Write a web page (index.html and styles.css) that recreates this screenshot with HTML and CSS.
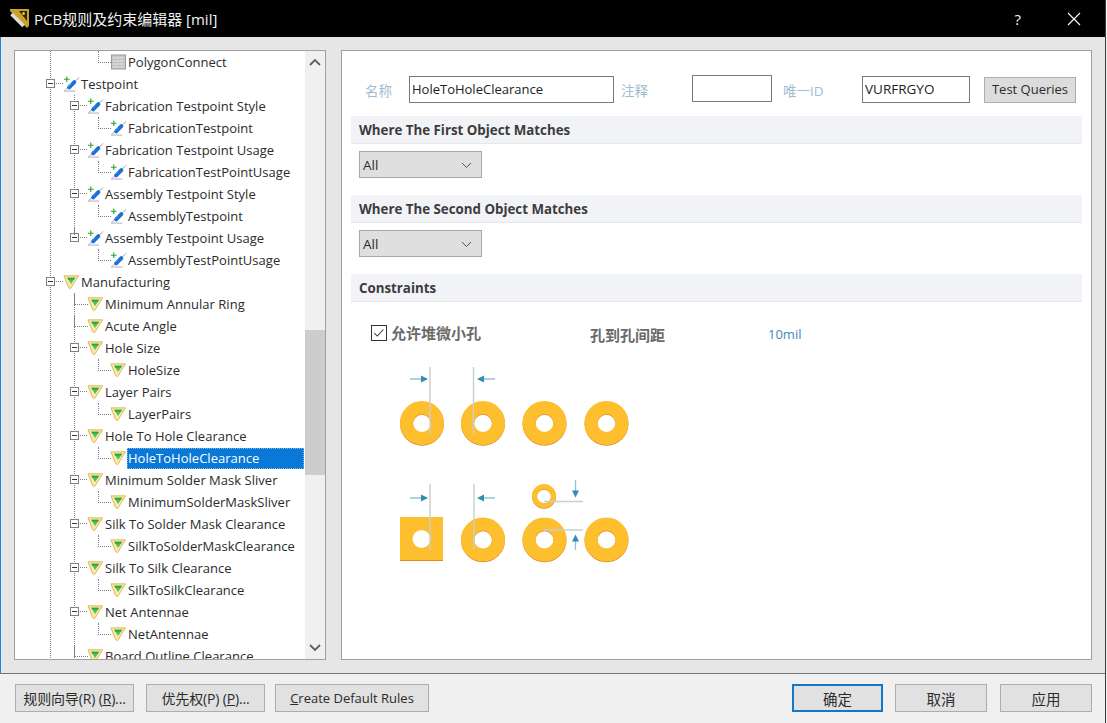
FILE: index.html
```html
<!DOCTYPE html>
<html lang="zh-CN">
    <head>
        <meta charset="UTF-8" />
        <title>PCB规则及约束编辑器 [mil]</title>
        <link rel="stylesheet" href="styles.css">
    </head>
    <body>
        <svg class="defs" width="0" height="0">
            <symbol id="i-gray" viewBox="0 0 16 16">
                <rect x="1" y="1" width="14" height="14" fill="#c8c8c8" stroke="#9a9a9a"/>
                <path d="M3 4h10M3 7h10M3 10h10M3 13h10" stroke="#ececec" stroke-width="1.2" stroke-dasharray="2 1"/>
                <path d="M3 5.500h10M3 8.500h10M3 11.500h10" stroke="#a8a8a8" stroke-width=".8" stroke-dasharray="1 2"/>
            </symbol>
            <symbol id="i-test" viewBox="0 0 18 16">
                <path d="M4 0v6M1 3h6" stroke="#2aa336" stroke-width="1.2" fill="none"/>
                <path d="M1 15.500h12" stroke="#b4a6c6" stroke-width="1"/>
                <path d="M2 15l3-3M13 5l4-4" stroke="#9a9a9a" stroke-width="1"/>
                <path d="M6.500 11.500L12 6" stroke="#1c6fd6" stroke-width="4.200" stroke-linecap="round"/>
                <path d="M6 10l3-3" stroke="#6fb2f0" stroke-width="1"/>
            </symbol>
            <symbol id="i-manu" viewBox="0 0 18 16">
                <path d="M1 1.500h15.500L8 15l-2-1z" fill="#fbe9a4" stroke="#d8ac48" stroke-width=".9"/>
                <path d="M4.500 3.500h8.500L8.500 10z" fill="#4fc05e"/>
                <path d="M4.500 3.500h8.500l-1.500 2.200H5.300z" fill="#2fa844"/>
            </symbol>
        </svg>

        <div class="window">
            <div class="titlebar">
                <svg class="logo" width="20" height="20" viewBox="0 0 20 20">
                    <path d="M0 0h19v17l-2 2L0 2z" fill="#c9a227"/>
                    <path d="M9 2h8v10z" fill="#2c2410"/>
                    <circle cx="13.500" cy="4.500" r="1.500" fill="#e8c23a"/>
                    <path d="M1.500 5l12 12" stroke="#dcdcdc" stroke-width="3.600"/>
                </svg>
                <span class="title">PCB规则及约束编辑器 [mil]</span>
                <span class="help">?</span>
                <svg class="close" width="14" height="14" viewBox="0 0 14 14">
                    <path d="M1 1l12 12M13 1L1 13" stroke="#fff" stroke-width="1.1"/>
                </svg>
            </div>

            <div class="content">
                <div class="tree-panel">
                    <div class="tree">
                        <div class="row lv2"><svg class="icon"><use href="#i-gray"/></svg><span class="label">PolygonConnect</span></div>
                        <div class="row lv0 open"><i class="box"></i><svg class="icon"><use href="#i-test"/></svg><span class="label">Testpoint</span></div>
                        <div class="row lv1 on open"><i class="box"></i><svg class="icon"><use href="#i-test"/></svg><span class="label">Fabrication Testpoint Style</span></div>
                        <div class="row lv2 on"><svg class="icon"><use href="#i-test"/></svg><span class="label">FabricationTestpoint</span></div>
                        <div class="row lv1 on open"><i class="box"></i><svg class="icon"><use href="#i-test"/></svg><span class="label">Fabrication Testpoint Usage</span></div>
                        <div class="row lv2 on"><svg class="icon"><use href="#i-test"/></svg><span class="label">FabricationTestPointUsage</span></div>
                        <div class="row lv1 on open"><i class="box"></i><svg class="icon"><use href="#i-test"/></svg><span class="label">Assembly Testpoint Style</span></div>
                        <div class="row lv2 on"><svg class="icon"><use href="#i-test"/></svg><span class="label">AssemblyTestpoint</span></div>
                        <div class="row lv1 last open"><i class="box"></i><svg class="icon"><use href="#i-test"/></svg><span class="label">Assembly Testpoint Usage</span></div>
                        <div class="row lv2"><svg class="icon"><use href="#i-test"/></svg><span class="label">AssemblyTestPointUsage</span></div>
                        <div class="row lv0 open"><i class="box"></i><svg class="icon"><use href="#i-manu"/></svg><span class="label">Manufacturing</span></div>
                        <div class="row lv1 on"><svg class="icon"><use href="#i-manu"/></svg><span class="label">Minimum Annular Ring</span></div>
                        <div class="row lv1 on"><svg class="icon"><use href="#i-manu"/></svg><span class="label">Acute Angle</span></div>
                        <div class="row lv1 on open"><i class="box"></i><svg class="icon"><use href="#i-manu"/></svg><span class="label">Hole Size</span></div>
                        <div class="row lv2 on"><svg class="icon"><use href="#i-manu"/></svg><span class="label">HoleSize</span></div>
                        <div class="row lv1 on open"><i class="box"></i><svg class="icon"><use href="#i-manu"/></svg><span class="label">Layer Pairs</span></div>
                        <div class="row lv2 on"><svg class="icon"><use href="#i-manu"/></svg><span class="label">LayerPairs</span></div>
                        <div class="row lv1 on open"><i class="box"></i><svg class="icon"><use href="#i-manu"/></svg><span class="label">Hole To Hole Clearance</span></div>
                        <div class="row lv2 on"><svg class="icon"><use href="#i-manu"/></svg><span class="label selected">HoleToHoleClearance</span></div>
                        <div class="row lv1 on open"><i class="box"></i><svg class="icon"><use href="#i-manu"/></svg><span class="label">Minimum Solder Mask Sliver</span></div>
                        <div class="row lv2 on"><svg class="icon"><use href="#i-manu"/></svg><span class="label">MinimumSolderMaskSliver</span></div>
                        <div class="row lv1 on open"><i class="box"></i><svg class="icon"><use href="#i-manu"/></svg><span class="label">Silk To Solder Mask Clearance</span></div>
                        <div class="row lv2 on"><svg class="icon"><use href="#i-manu"/></svg><span class="label">SilkToSolderMaskClearance</span></div>
                        <div class="row lv1 on open"><i class="box"></i><svg class="icon"><use href="#i-manu"/></svg><span class="label">Silk To Silk Clearance</span></div>
                        <div class="row lv2 on"><svg class="icon"><use href="#i-manu"/></svg><span class="label">SilkToSilkClearance</span></div>
                        <div class="row lv1 on open"><i class="box"></i><svg class="icon"><use href="#i-manu"/></svg><span class="label">Net Antennae</span></div>
                        <div class="row lv2 on"><svg class="icon"><use href="#i-manu"/></svg><span class="label">NetAntennae</span></div>
                        <div class="row lv1 on"><svg class="icon"><use href="#i-manu"/></svg><span class="label">Board Outline Clearance</span></div>
                    </div>
                    <div class="scrollbar">
                        <svg class="arrow" width="12" height="22" viewBox="0 0 12 22"><path d="M1 14l5-5 5 5" fill="none" stroke="#606060" stroke-width="1.800"/></svg>
                        <div class="track"><div class="thumb"></div></div>
                        <svg class="arrow" width="12" height="22" viewBox="0 0 12 22"><path d="M1 8l5 5 5-5" fill="none" stroke="#606060" stroke-width="1.800"/></svg>
                    </div>
                </div>

                <div class="rule-panel">
                    <div class="form-row">
                        <span class="tag tag-name">名称</span>
                        <div class="input input-name">HoleToHoleClearance</div>
                        <span class="tag tag-note">注释</span>
                        <div class="input input-note"></div>
                        <span class="tag tag-id">唯一ID</span>
                        <div class="input input-id">VURFRGYO</div>
                        <div class="btn btn-test">Test Queries</div>
                    </div>

                    <div class="section first">Where The First Object Matches</div>
                    <div class="select">All<svg width="11" height="6" viewBox="0 0 11 6"><path d="M1 1l4.500 4.500L10 1" fill="none" stroke="#555"/></svg></div>

                    <div class="section">Where The Second Object Matches</div>
                    <div class="select">All<svg width="11" height="6" viewBox="0 0 11 6"><path d="M1 1l4.500 4.500L10 1" fill="none" stroke="#555"/></svg></div>

                    <div class="section">Constraints</div>
                    <div class="constraint">
                        <span class="check"><svg width="16" height="16" viewBox="0 0 16 16"><path d="M2.500 8l3.500 3.500L13 4" fill="none" stroke="#333" stroke-width="1.200"/></svg></span>
                        <span class="check-text">允许堆微小孔</span>
                        <span class="gap-text">孔到孔间距</span>
                        <span class="gap-val">10mil</span>
                    </div>

                    <svg class="diagram" width="250" height="205" viewBox="395 365 250 205">
                        <defs>
                            <mask id="hole-square"><rect x="395" y="365" width="250" height="205" fill="#fff"/><circle cx="421.500" cy="539" r="9" fill="#000"/></mask>
                        </defs>
                        <g fill="none" stroke="#dd8a26" transform="translate(0 .8)">
                            <circle cx="422" cy="423" r="15.500" stroke-width="13"/>
                            <circle cx="483" cy="423" r="15.500" stroke-width="13"/>
                            <circle cx="544.500" cy="423" r="15.500" stroke-width="13"/>
                            <circle cx="606.500" cy="423" r="15.500" stroke-width="13"/>
                            <circle cx="483" cy="539.500" r="15.500" stroke-width="13"/>
                            <circle cx="544.500" cy="539.500" r="15.500" stroke-width="13"/>
                            <circle cx="606.500" cy="539.500" r="15.500" stroke-width="13"/>
                            <circle cx="544" cy="496" r="9.500" stroke-width="5"/>
                        </g>
                        <g fill="none" stroke="#fdbf2d">
                            <circle cx="422" cy="423" r="15.500" stroke-width="13"/>
                            <circle cx="483" cy="423" r="15.500" stroke-width="13"/>
                            <circle cx="544.500" cy="423" r="15.500" stroke-width="13"/>
                            <circle cx="606.500" cy="423" r="15.500" stroke-width="13"/>
                            <circle cx="483" cy="539.500" r="15.500" stroke-width="13"/>
                            <circle cx="544.500" cy="539.500" r="15.500" stroke-width="13"/>
                            <circle cx="606.500" cy="539.500" r="15.500" stroke-width="13"/>
                            <circle cx="544" cy="496" r="9.500" stroke-width="5"/>
                        </g>
                        <rect x="400" y="517" width="43" height="44" fill="#fdbf2d" mask="url(#hole-square)"/>
                        <path d="M400 560.500h43" stroke="#e08a20"/>
                        <g stroke="#cdcdcd" stroke-width="1.400">
                            <path d="M430 367v67M473.500 367v67M430 484v66M474 484v66M544 501.500h39M544 530h39"/>
                        </g>
                        <g stroke="#8fc4d6" stroke-width="1.300">
                            <path d="M410 379h14M495 379h-14M410 498h14M495 498h-14M575.500 480v12M575.500 550v-12"/>
                        </g>
                        <g fill="#2f8fb0">
                            <path d="M421 375.500l7 3.500-7 3.500zM484 375.500l-7 3.500 7 3.500zM421 494.500l7 3.500-7 3.500zM484 494.500l-7 3.500 7 3.500zM572 490.500l3.500 7 3.500-7zM572 541.500l3.500-7 3.500 7z"/>
                        </g>
                    </svg>
                </div>
            </div>

            <div class="footer">
                <div class="btn btn-foot">规则向导(R) (<u>R</u>)...</div>
                <div class="btn btn-foot">优先权(P) (<u>P</u>)...</div>
                <div class="btn btn-create"><u>C</u>reate Default Rules</div>
                <div class="spacer"></div>
                <div class="btn btn-act default">确定</div>
                <div class="btn btn-act">取消</div>
                <div class="btn btn-act">应用</div>
            </div>
        </div>
    </body>
</html>
```

FILE: styles.css
```css
* {
    box-sizing: border-box;
}

html,
body {
    margin: 0;
    height: 100%;
    overflow: hidden;
}

body {
    font-family: "Open Sans", "Noto Sans CJK SC", sans-serif;
    font-size: 13px;
    color: #2b2b2b;
    background: #f0f0f0;
}

.defs {
    position: absolute;
}

.window {
    width: 1106px;
    height: 723px;
    display: flex;
    flex-direction: column;
    border-right: 1px solid #3c3c3c;
}

.titlebar {
    height: 37px;
    background: #000;
    color: #f2f2f2;
    display: flex;
    align-items: center;
    padding-left: 10px;
    font-size: 15px;
}

.logo {
    margin-right: 4px;
}

.title {
    flex: 1;
}

.help {
    font-size: 15px;
    margin-right: 46px;
}

.close {
    margin-right: 24px;
}

.content {
    height: 637px;
    background: #e6e6e6;
    border-left: 1px solid #1f86d8;
    border-bottom: 1px solid #70787c;
    display: flex;
    padding: 13px 13px 0 13px;
    gap: 15px;
}

.tree-panel {
    width: 312px;
    height: 610px;
    background: #fff;
    border: 1px solid #a0a0a0;
    display: flex;
    overflow: hidden;
}

.tree {
    width: 290px;
    height: 608px;
    overflow: hidden;
}

.row {
    height: 22px;
    display: flex;
    align-items: center;
    position: relative;
    white-space: nowrap;
    --dots: linear-gradient(#808080 50%, transparent 50%);
    background-image: var(--dots);
    background-size: 1px 2px;
    background-repeat: repeat-y;
    background-position: 35px 0;
}

.row.on {
    background-image: var(--dots), var(--dots);
    background-position: 35px 0, 59px 0;
    background-size: 1px 2px, 1px 2px;
}

.lv0 {
    padding-left: 48px;
}

.lv1 {
    padding-left: 72px;
}

.lv2 {
    padding-left: 95px;
}

/* elbow from the parent down to the icon */
.lv1::before,
.lv2::before {
    content: "";
    position: absolute;
    top: 0;
    height: 11px;
    border-left: 1px dotted #808080;
    border-bottom: 1px dotted #808080;
}

.lv1::before {
    left: 59px;
    width: 13px;
}

.lv2::before {
    left: 83px;
    width: 12px;
}

/* the box already draws the joint */
.lv1.open::before {
    width: 0;
    border-bottom: 0;
}

.last::after {
    content: "";
    position: absolute;
    left: 59px;
    top: 0;
    height: 8px;
    border-left: 1px dotted #808080;
}

.box {
    position: absolute;
    top: 6px;
    width: 9px;
    height: 9px;
    background: #fff;
    border: 1px solid #808080;
}

.box::before {
    content: "";
    position: absolute;
    left: 1px;
    right: 1px;
    top: 3px;
    border-top: 1px solid #333;
}

.box::after {
    content: "";
    position: absolute;
    left: 9px;
    top: 3px;
    width: 7px;
    border-top: 1px dotted #808080;
}

.lv0 .box {
    left: 31px;
}

.lv1 .box {
    left: 55px;
}

.icon {
    width: 17px;
    height: 16px;
    flex: none;
}

.label {
    padding: 0 1px;
    height: 21px;
    line-height: 21px;
    letter-spacing: 0.02px;
}

.selected {
    background: #0a78d7;
    color: #fff;
    width: 177px;
    outline: 1px dotted #7db8ea;
    outline-offset: -1px;
}

.scrollbar {
    width: 20px;
    background: #f0f0f0;
    display: flex;
    flex-direction: column;
    align-items: center;
}

.arrow {
    flex: none;
}

.track {
    flex: 1;
    width: 100%;
    padding-top: 257px;
}

.thumb {
    height: 145px;
    background: #cdcdcd;
}

.rule-panel {
    width: 751px;
    height: 610px;
    background: #fff;
    border: 1px solid #a0a0a0;
    padding: 0 9px;
}

.form-row {
    height: 65px;
    display: flex;
    align-items: center;
    padding-top: 12px;
    margin-right: 6px;
}

.tag {
    color: #a0bcd2;
    font-size: 13.500px;
}

.tag-name {
    margin-left: 14px;
    width: 44px;
}

.tag-note {
    margin-left: 7px;
    width: 71px;
}

.tag-id {
    margin-left: 11px;
    width: 79px;
}

.input {
    height: 27px;
    line-height: 25px;
    background: #fff;
    border: 1px solid #7a7a7a;
    padding-left: 2px;
    color: #222;
}

.input-name {
    width: 205px;
}

.input-note {
    width: 80px;
    margin-top: -2px;
}

.input-id {
    width: 108px;
    font-size: 13.500px;
}

.btn {
    background: #e1e1e1;
    border: 1px solid #adadad;
    display: flex;
    align-items: center;
    justify-content: center;
    color: #2b2b2b;
}

.btn-test {
    width: 92px;
    height: 26px;
    margin-left: 14px;
    padding-bottom: 2px;
    background: #dcdcdc;
}

.section {
    height: 28px;
    line-height: 28px;
    margin-top: 17px;
    padding-left: 8px;
    background: #f1f3f6;
    border-bottom: 1px solid #e8e8e8;
    font-size: 13.300px;
    font-weight: 700;
    color: #3c3c3c;
}

.section.first {
    margin-top: 0;
}

.select {
    width: 123px;
    height: 27px;
    margin: 7px 0 0 8px;
    padding: 0 9px 0 3px;
    background: #dfdfdf;
    border: 1px solid #a8a8a8;
    display: flex;
    align-items: center;
    justify-content: space-between;
    font-size: 13.500px;
}

.constraint {
    display: flex;
    align-items: center;
    height: 20px;
    margin: 21px 0 0 20px;
    font-size: 15px;
    font-weight: 700;
    color: #6a6a6a;
}

.check {
    width: 16px;
    height: 16px;
    border: 1px solid #333;
    margin-right: 4px;
    display: flex;
    align-items: center;
    justify-content: center;
}

.check-text {
    width: 199px;
    margin-top: -2px;
}

.gap-text {
    width: 178px;
    margin-top: 2px;
}

.gap-val {
    font-size: 13px;
    font-weight: 400;
    color: #3a8bc0;
    margin-top: 2px;
}

.diagram {
    display: block;
    margin: 22px 0 0 44px;
}

.footer {
    flex: 1;
    display: flex;
    align-items: flex-start;
    padding: 10px 13px 0 15px;
    background: #f0f0f0;
}

.btn-foot {
    width: 119px;
    height: 28px;
    margin-right: 12px;
    font-size: 14px;
    letter-spacing: -0.15px;
}

.btn-foot + .btn-create {
    margin-left: -2px;
}

.btn-create {
    width: 154px;
    height: 28px;
}

.spacer {
    flex: 1;
}

.btn-act {
    width: 92px;
    height: 28px;
    margin-left: 13px;
    font-size: 14.500px;
}

.btn-act.default {
    border: 2px solid #0f78c8;
    width: 91px;
    margin-left: 0;
}

.default + .btn-act {
    margin-left: 12px;
}
```
